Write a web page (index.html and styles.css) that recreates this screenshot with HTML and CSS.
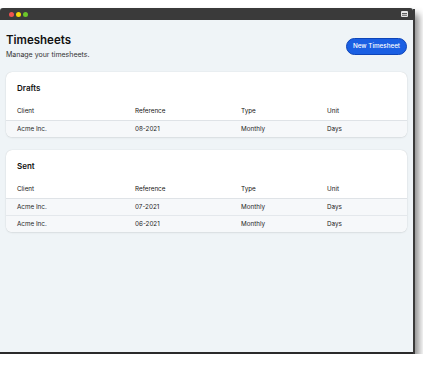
FILE: index.html
```html
<!DOCTYPE html>
<html lang="en">
<head>
    <meta charset="UTF-8">
    <title>Timesheets</title>
    <link rel="stylesheet" href="styles.css">
</head>
<body>
    <div class="window">
        <div class="titlebar">
            <div class="dots">
                <span class="dot red"></span>
                <span class="dot yellow"></span>
                <span class="dot green"></span>
            </div>
            <svg class="menu" width="7" height="6" viewBox="0 0 7 6">
                <rect x="0" y="0" width="7" height="6" rx="1" fill="#e6e6e6"/>
                <rect x="1" y="2" width="5" height="0.8" fill="#3a3a3a"/>
                <rect x="1" y="3.8" width="5" height="0.8" fill="#3a3a3a"/>
            </svg>
        </div>
        <div class="content">
            <div class="page-head">
                <div>
                    <h1>Timesheets</h1>
                    <p class="subtitle">Manage your timesheets.</p>
                </div>
                <button class="btn">New Timesheet</button>
            </div>

            <section class="card">
                <h2>Drafts</h2>
                <div class="table">
                    <div class="row head">
                        <span>Client</span><span>Reference</span><span>Type</span><span>Unit</span>
                    </div>
                    <div class="row">
                        <span>Acme Inc.</span><span>08-2021</span><span>Monthly</span><span>Days</span>
                    </div>
                </div>
            </section>

            <section class="card">
                <h2>Sent</h2>
                <div class="table">
                    <div class="row head">
                        <span>Client</span><span>Reference</span><span>Type</span><span>Unit</span>
                    </div>
                    <div class="row">
                        <span>Acme Inc.</span><span>07-2021</span><span>Monthly</span><span>Days</span>
                    </div>
                    <div class="row">
                        <span>Acme Inc.</span><span>06-2021</span><span>Monthly</span><span>Days</span>
                    </div>
                </div>
            </section>
        </div>
    </div>
</body>
</html>
```

FILE: styles.css
```css
/* Ventana y fondo */
body {
    margin: 0;
    padding-top: 8px;
    background: #ffffff;
    font-family: 'Inter', 'Liberation Sans', sans-serif;
    color: #1c1c1c;
}

.window {
    width: 413px;
    height: 346px;
    display: flex;
    flex-direction: column;
    background: #eff4f7;
    border-bottom: 2px solid #2a2a2a;
    box-sizing: border-box;
    box-shadow: 2px 1px 0 #3a3a3a, 6px 6px 7px rgba(0, 0, 0, 0.45);
}

.titlebar {
    height: 12px;
    background: #3a3a3a;
    border-radius: 3px 3px 0 0;
    display: flex;
    align-items: center;
    justify-content: space-between;
    padding: 0 5px 0 9px;
}

.dots {
    display: flex;
    gap: 2px;
}

.dot {
    width: 5px;
    height: 5px;
    border-radius: 50%;
}

.red { background: #f0524f; }
.yellow { background: #f5d90a; }
.green { background: #6cc62a; }

.content {
    padding: 13px 6px 0 6px;
    display: flex;
    flex-direction: column;
    gap: 13px;
}

.page-head {
    height: 26px;
    display: flex;
    justify-content: space-between;
    align-items: center;
}

h1 {
    margin: 0;
    font-size: 11.5px;
    line-height: 15px;
    font-weight: 600;
    color: #111;
}

.subtitle {
    margin: 2px 0 0;
    font-size: 7px;
    line-height: 9px;
    color: #333;
}

.btn {
    background: #1a5fe3;
    color: #fff;
    border: 1px solid #0e45b8;
    border-radius: 10px;
    height: 17px;
    width: 61px;
    padding: 0;
    font-family: inherit;
    font-size: 6.3px;
    font-weight: 500;
}

.card {
    background: #fff;
    border-radius: 6px;
    box-shadow: 0 0 1px rgba(0, 0, 0, 0.2), 0 1px 2px rgba(0, 0, 0, 0.08);
    overflow: hidden;
}

h2 {
    margin: 0;
    height: 30px;
    box-sizing: border-box;
    padding: 11px 11px 0;
    font-size: 8px;
    line-height: 10px;
    font-weight: 600;
    color: #111;
}

.row {
    display: grid;
    grid-template-columns: 118px 106px 86px 1fr;
    align-items: center;
    height: 16px;
    border-top: 1px solid #e4e8ec;
    background: #f6f8fa;
    font-size: 6.3px;
    color: #1c1c1c;
}

.row span {
    padding-left: 11px;
}

.row.head {
    border-top: none;
    background: #fff;
    height: 18px;
    color: #111;
}

.row.head + .row {
    border-top: 1px solid #dfe3e7;
}
```
